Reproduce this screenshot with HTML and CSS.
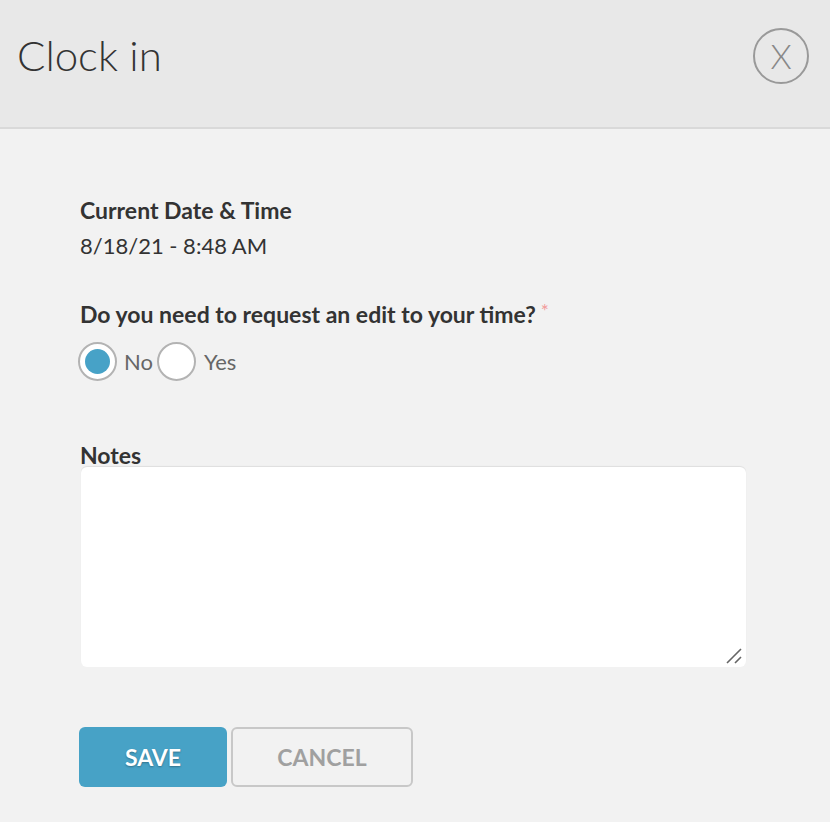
FILE: index.html
```html
<!DOCTYPE html>
<html>
<head>
<meta charset="utf-8">
<link rel="stylesheet" href="styles.css">
</head>
<body>
<div class="modal">
  <header class="header">
    <h1 class="title">Clock in</h1>
    <button class="close" aria-label="Close">X</button>
  </header>
  <main class="content">
    <div class="field">
      <div class="label">Current Date &amp; Time</div>
      <div class="value">8/18/21 - 8:48 AM</div>
    </div>
    <div class="field question">
      <div class="label">Do you need to request an edit to your time?<span class="req">*</span></div>
      <div class="radios">
        <span class="radio checked"></span><span class="opt">No</span>
        <span class="radio"></span><span class="opt opt-yes">Yes</span>
      </div>
    </div>
    <div class="field notes">
      <div class="label notes-label">Notes</div>
      <div class="textarea">
        <svg class="grip" width="16" height="16" viewBox="0 0 16 16"><path d="M1 15 L15 1 M9 15 L15 9" stroke="#666" stroke-width="1.6" fill="none"/></svg>
      </div>
    </div>
    <div class="actions">
      <button class="btn save">SAVE</button>
      <button class="btn cancel">CANCEL</button>
    </div>
  </main>
</div>
</body>
</html>
```

FILE: styles.css
```css
* { box-sizing: border-box; }
html, body { margin: 0; padding: 0; }
body {
  width: 830px;
  height: 822px;
  background: #f2f2f2;
  font-family: Lato, "Open Sans", sans-serif;
  color: #333;
  overflow: hidden;
}
.header {
  height: 129px;
  background: #e8e8e8;
  border-bottom: 2px solid #d9d9d9;
  display: flex;
  align-items: flex-start;
  justify-content: space-between;
  padding: 0 21px 0 17px;
}
.title {
  margin: 28px 0 0;
  font-weight: 300;
  font-size: 42px;
  line-height: 54px;
  color: #333;
}
.close {
  margin-top: 28px;
  width: 56px;
  height: 56px;
  border-radius: 50%;
  border: 2px solid #999;
  background: transparent;
  color: #888;
  font-family: Lato, sans-serif;
  font-weight: 300;
  font-size: 34px;
  line-height: 1;
  padding: 0;
  display: flex;
  align-items: center;
  justify-content: center;
}
.content {
  padding: 67px 84px 0 80px;
}
.label {
  font-weight: 700;
  font-size: 23px;
  line-height: 28px;
  color: #333;
}
.value {
  font-size: 22px;
  line-height: 28px;
  margin-top: 8px;
  color: #333;
}
.question { margin-top: 37px; }
.req {
  color: #f29a9a;
  font-size: 19px;
  font-weight: 400;
  margin-left: 5px;
  vertical-align: 5px;
}
.radios {
  display: flex;
  align-items: center;
  margin-top: 14px;
  margin-left: -2px;
}
.radio {
  width: 39px;
  height: 39px;
  border-radius: 50%;
  border: 2px solid #b3b3b3;
  background: #fff;
  display: flex;
  align-items: center;
  justify-content: center;
}
.radio.checked::after {
  content: "";
  width: 25px;
  height: 25px;
  border-radius: 50%;
  background: #47a2c7;
}
.opt {
  font-size: 22px;
  color: #666;
  margin-left: 7px;
}
.opt-yes { margin-left: 8px; }
.opt + .radio { margin-left: 4px; }
.notes { margin-top: 62px; }
.notes-label { line-height: 24px; }
.textarea {
  height: 200px;
  margin-left: 1px;
  background: #fff;
  border-radius: 6px;
  box-shadow: 0 -1px 1px rgba(0,0,0,0.08);
  position: relative;
}
.grip {
  position: absolute;
  right: 4px;
  bottom: 3px;
}
.actions {
  display: flex;
  gap: 4px;
  margin-top: 60px;
  margin-left: -1px;
}
.btn {
  height: 60px;
  border-radius: 6px;
  font-family: Lato, sans-serif;
  font-weight: 700;
  font-size: 23px;
  padding: 0;
}
.save {
  width: 148px;
  background: #47a2c6;
  border: none;
  color: #fff;
  text-shadow: 0 1px 2px rgba(0,0,0,0.3);
}
.cancel {
  width: 182px;
  background: transparent;
  border: 2px solid #c8c8c8;
  color: #a0a0a0;
}
```
